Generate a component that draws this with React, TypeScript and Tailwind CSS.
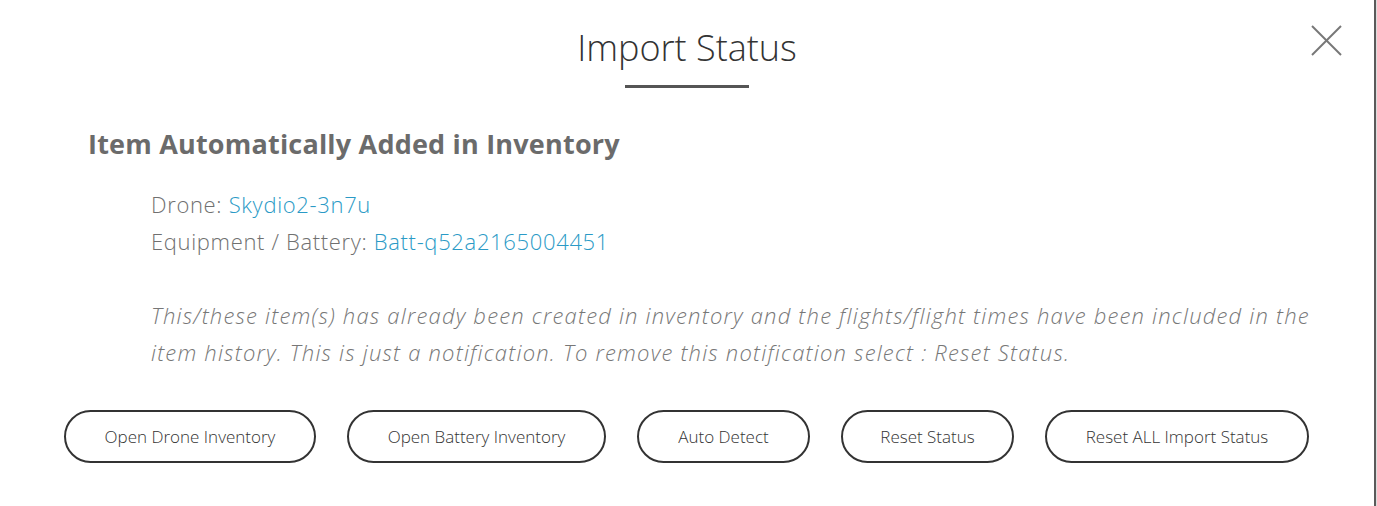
import React from 'react';

const buttons = [
  { label: 'Open Drone Inventory', w: 'w-[252px]' },
  { label: 'Open Battery Inventory', w: 'w-[259px]' },
  { label: 'Auto Detect', w: 'w-[173px]' },
  { label: 'Reset Status', w: 'w-[173px]' },
  { label: 'Reset ALL Import Status', w: 'w-[264px]' },
];

export default function App() {
  return (
    <div className="flex h-[506px] w-[1377px] bg-white font-['Open_Sans','Lato',sans-serif]">
      {/* modal body */}
      <div className="relative flex flex-1 flex-col">
        <button className="absolute right-[30px] top-[23px] text-[#777]" title="Close">
          <svg width="34" height="34" viewBox="0 0 34 34" fill="none" stroke="currentColor" strokeWidth="2">
            <line x1="2" y1="3" x2="31" y2="32" />
            <line x1="31" y1="3" x2="2" y2="32" />
          </svg>
        </button>

        <div className="flex flex-col items-center pt-[26px]">
          <h1 className="text-[36px] font-light leading-[44px] text-[#333]">Import Status</h1>
          <div className="mt-[15px] h-[3px] w-[124px] bg-[#555]" />
        </div>

        <h2 className="mt-[38px] pl-[88px] text-[27px] font-bold leading-[36px] tracking-[0.2px] text-[#6b6b6b]">
          Item Automatically Added in Inventory
        </h2>

        <div className="mt-[24px] pl-[151px] text-[22px] font-light leading-[37px] tracking-[0.03em] text-[#707070]">
          <div>
            Drone: <a className="text-[#2a9ac6]">Skydio2-3n7u</a>
          </div>
          <div>
            Equipment / Battery: <a className="text-[#2a9ac6]">Batt-q52a2165004451</a>
          </div>
        </div>

        <p className="mt-[37px] pl-[151px] text-[22px] font-light italic leading-[37px] tracking-[1.2px] text-[#777]">
          This/these item(s) has already been created in inventory and the flights/flight times have been included in the
          <br />
          item history. This is just a notification. To remove this notification select : Reset Status.
        </p>

        <div className="mt-[39px] flex gap-[31px] pl-[64px]">
          {buttons.map((b) => (
            <button
              key={b.label}
              className={`${b.w} h-[53px] rounded-full border-2 border-[#333] bg-white text-[17px] font-light text-[#333]`}
            >
              {b.label}
            </button>
          ))}
        </div>
      </div>
      {/* right edge of modal */}
      <div className="w-[2px] bg-[#5a5a5a]" />
      <div className="w-[1px] bg-[#dcdcdc]" />
    </div>
  );
}
